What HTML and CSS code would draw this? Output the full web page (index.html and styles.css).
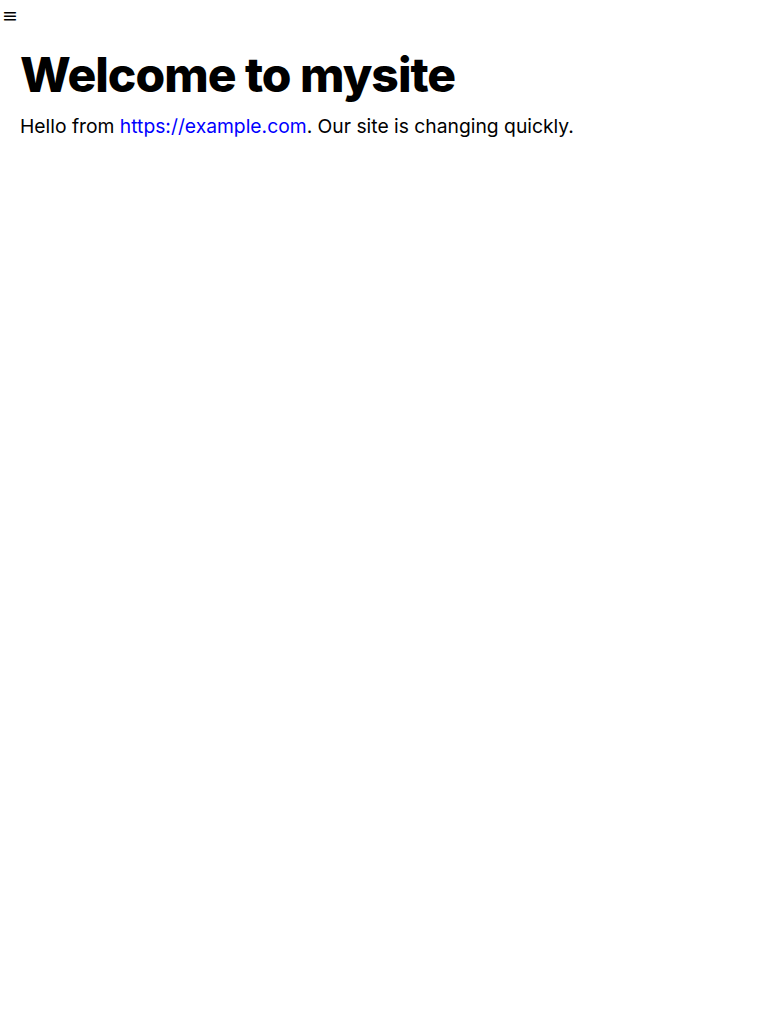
FILE: index.html
```html
<!DOCTYPE html>
<html lang="en">
<head>
  <meta charset="UTF-8" />
  <meta name="viewport" content="width=device-width, initial-scale=1.0"/>
  <title>mysite</title>
  <link rel="stylesheet" href="styles.css">
</head>
<body>
  <button class="menu-btn" aria-label="Menu">≡</button>

  <main class="content">
    <h1 class="title">Welcome to mysite</h1>
    <p class="intro">Hello from <a href="https://example.com">https://example.com</a>. Our site is changing quickly.</p>
  </main>
</body>
</html>
```

FILE: styles.css
```css
body {
  margin: 0;
  font-family: 'Inter', 'Noto Sans', sans-serif;
  background: #fff;
  color: #000;
}

.menu-btn {
  display: block;
  background: none;
  border: none;
  padding: 0 0 0 2px;
  margin: 0;
  font-family: 'DejaVu Sans', sans-serif;
  font-size: 19px;
  line-height: 30px;
  color: #000;
  cursor: pointer;
}

.content {
  padding: 16px 20px 0;
}

.title {
  font-size: 48px;
  font-weight: 800;
  letter-spacing: -1px;
  margin: 0 0 10px;
  line-height: 1.2;
}

.intro {
  font-size: 19.3px;
  margin: 0;
}

.intro a {
  color: #00f;
  text-decoration: none;
}
```
